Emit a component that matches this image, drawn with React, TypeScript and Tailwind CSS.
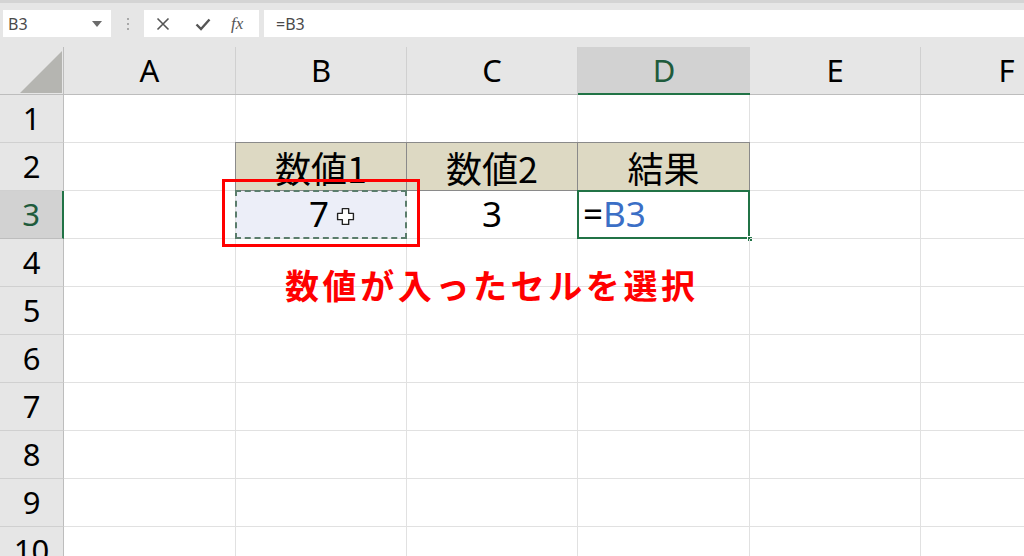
import React from 'react';

const COLS = ['A', 'B', 'C', 'D', 'E', 'F'];
const COL_W = [172, 171, 171, 172, 171, 172];
const ROWS = [1, 2, 3, 4, 5, 6, 7, 8, 9, 10];

const jp = { fontFamily: '"Noto Sans CJK JP", "Noto Sans", sans-serif' };
const latin = { fontFamily: '"Noto Sans", "Noto Sans CJK JP", sans-serif' };

const Toolbar: React.FC = () => (
  <div className="h-[47px] bg-[#e6e6e6] border-t-[3px] border-[#d4d4d4] flex items-start pt-[7px] gap-0" style={latin}>
    <div className="ml-[3px] w-[108px] h-[27px] bg-white flex items-center justify-between px-[5px] text-[16px] text-[#4a4a4a]">
      <span>B3</span>
      <svg width="10" height="6" viewBox="0 0 10 6" className="mr-[4px]">
        <path d="M0 0 L10 0 L5 6 Z" fill="#6b6b6b" />
      </svg>
    </div>
    <div className="w-[33px] h-[27px] flex flex-col items-center justify-center gap-[3px]">
      <span className="w-[2px] h-[2px] bg-[#a8a8a8]" />
      <span className="w-[2px] h-[2px] bg-[#a8a8a8]" />
      <span className="w-[2px] h-[2px] bg-[#a8a8a8]" />
    </div>
    <div className="w-[115px] h-[27px] bg-white flex items-center">
      <svg width="14" height="14" viewBox="0 0 14 14" className="ml-[12px]">
        <path d="M1.5 1.5 L12.5 12.5 M12.5 1.5 L1.5 12.5" stroke="#555" strokeWidth="1.6" />
      </svg>
      <svg width="16" height="14" viewBox="0 0 16 14" className="ml-[25px]">
        <path d="M1.5 7.5 L6 12 L14.5 2.5" stroke="#555" strokeWidth="2.4" fill="none" />
      </svg>
      <span className="ml-[20px] text-[17px] italic text-[#555]" style={{ fontFamily: '"Liberation Serif", serif' }}>fx</span>
    </div>
    <div className="ml-[5px] flex-1 h-[27px] bg-white flex items-center pl-[12px] text-[16px] text-[#4a4a4a]">
      =B3
    </div>
  </div>
);

const CellCursor: React.FC = () => (
  <svg width="19" height="19" viewBox="0 0 18 18">
    <path
      d="M6 1.5 H12 V6 H16.5 V12 H12 V16.5 H6 V12 H1.5 V6 H6 Z"
      fill="white"
      stroke="#222"
      strokeWidth="1.3"
      strokeLinejoin="round"
    />
  </svg>
);

const App: React.FC = () => {
  const cellContent = (r: number, c: number): React.ReactNode => {
    if (r === 2 && c >= 1 && c <= 3) {
      const t = ['数値1', '数値2', '結果'][c - 1];
      return (
        <div className="absolute inset-[-1px] bg-[#ddd9c3] border border-[#8a8a8a] flex items-center justify-center text-[36px] text-black" style={jp}>
          {t}
        </div>
      );
    }
    if (r === 3 && c === 1) {
      return (
        <>
          <div className="absolute inset-0 bg-[#eceef8] flex items-center justify-center text-[35px] text-black" style={latin}>
            <span className="ml-[22px]">7</span>
            <span className="ml-[7px] mt-[4px]"><CellCursor /></span>
          </div>
          <div className="absolute inset-[-1px] border-[2px] border-dashed border-[#5b7d6c]" />
          <div className="absolute left-[-14px] top-[-12px] right-[-14px] bottom-[-9px] border-[3px] border-[#ff0000] z-10" />
        </>
      );
    }
    if (r === 3 && c === 2) {
      return (
        <div className="absolute inset-0 flex items-center justify-center text-[35px] text-black" style={latin}>3</div>
      );
    }
    if (r === 3 && c === 3) {
      return (
        <>
          <div className="absolute inset-0 flex items-center pl-[5px] text-[35px]" style={latin}>
            <span className="text-black">=</span>
            <span className="text-[#3b6fc6]">B3</span>
          </div>
          <div className="absolute left-[-1px] top-[-1px] right-[-1px] bottom-[-1px] border-[2px] border-[#217346]" />
          <div className="absolute right-[-4px] bottom-[-4px] w-[6px] h-[6px] bg-[#217346] border border-white" />
        </>
      );
    }
    return null;
  };

  return (
    <div className="w-[1024px] h-[556px] overflow-hidden bg-white relative">
      <Toolbar />
      {/* column header row */}
      <div className="flex h-[48px] bg-[#e6e6e6] border-b border-[#bdbdbd]" style={latin}>
        <div className="w-[64px] shrink-0 relative border-r border-[#bdbdbd]">
          <svg width="44" height="44" viewBox="0 0 44 44" className="absolute left-[19px] top-[3px]">
            <path d="M43 1 L43 43 L1 43 Z" fill="#b5b5b1" />
          </svg>
        </div>
        {COLS.map((c, i) => (
          <div
            key={c}
            style={{ width: COL_W[i] }}
            className={`shrink-0 flex items-center justify-center text-[31px] ${
              c === 'D'
                ? 'bg-[#d2d2d2] text-[#1f5b3c] border-b-[2px] border-[#217346] mb-[-1px]'
                : 'text-black border-r border-[#d0d0d0]'
            }`}
          >
            {c}
          </div>
        ))}
      </div>
      {ROWS.map((r) => (
        <div key={r} className="flex h-[48px]">
          <div
            className={`w-[64px] shrink-0 flex items-center justify-center text-[31px] border-b ${
              r === 3
                ? 'bg-[#d2d2d2] text-[#1f5b3c] border-r-[2px] border-r-[#217346] border-b-[#bdbdbd]'
                : 'bg-[#e6e6e6] text-black border-r border-r-[#bdbdbd] border-b-[#d0d0d0]'
            }`}
            style={latin}
          >
            {r}
          </div>
          {COLS.map((c, i) => (
            <div
              key={c}
              style={{ width: COL_W[i] }}
              className="shrink-0 relative border-r border-b border-[#e1e1e1]"
            >
              {cellContent(r, i)}
            </div>
          ))}
        </div>
      ))}
      <div
        className="absolute left-[285px] top-[259px] text-[34px] font-bold text-[#ff0000] tracking-[3.6px] whitespace-nowrap"
        style={jp}
      >
        数値が入ったセルを選択
      </div>
    </div>
  );
};

export default App;
